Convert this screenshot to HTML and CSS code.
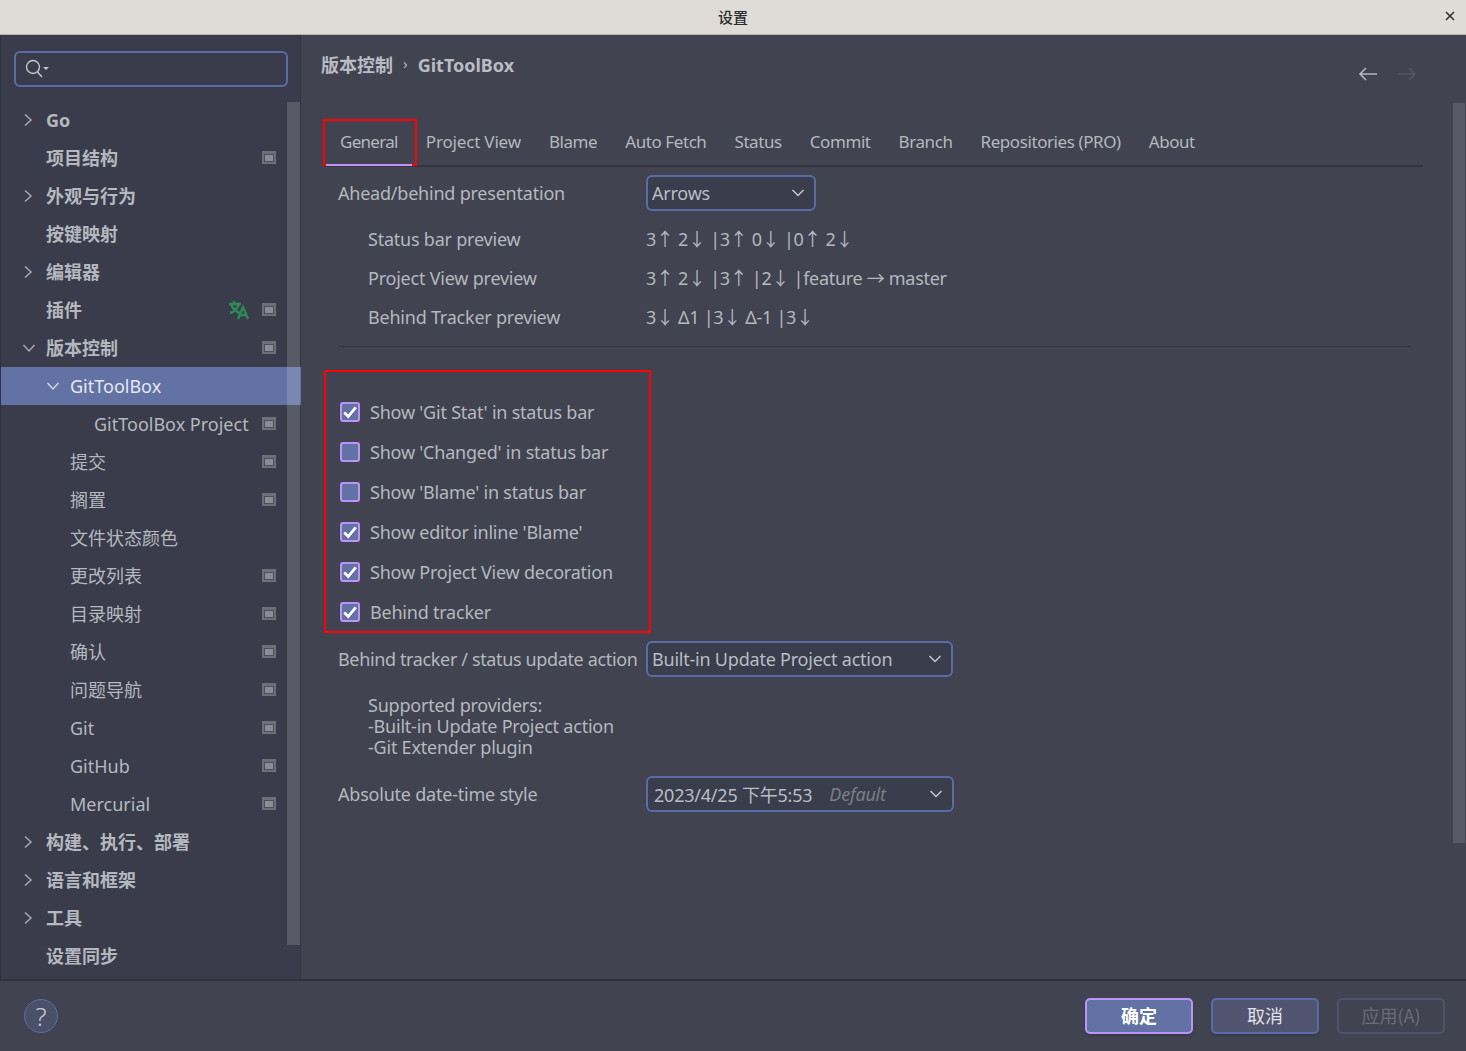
FILE: index.html
```html
<!doctype html>
<html>
    <head>
        <meta charset="utf-8">
        <title>设置</title>
        <link rel="stylesheet" href="styles.css">
    </head>
    <body>
        <header class="titlebar">
            <span class="title">设置</span>
            <svg class="close" width="10" height="10" viewBox="0 0 10 10"><path d="M1 1 9 9M9 1 1 9"/></svg>
        </header>
        <div class="main">
            <aside class="sidebar">
                <div class="search">
                    <svg width="26" height="22" viewBox="0 0 26 22"><circle cx="9" cy="9" r="6.5"/><path d="M13.5 14 18 19"/><path class="fill" d="M19 9h6l-3 3z"/></svg>
                </div>
                <nav class="tree">
                    <div class="row top"><svg class="chev" width="10" height="14" viewBox="0 0 10 14"><path d="M2 1.5 8 7l-6 5.5"/></svg><span class="latin">Go</span></div>
                    <div class="row top"><span>项目结构</span><i class="mod"></i></div>
                    <div class="row top"><svg class="chev" width="10" height="14" viewBox="0 0 10 14"><path d="M2 1.5 8 7l-6 5.5"/></svg><span>外观与行为</span></div>
                    <div class="row top"><span>按键映射</span></div>
                    <div class="row top"><svg class="chev" width="10" height="14" viewBox="0 0 10 14"><path d="M2 1.5 8 7l-6 5.5"/></svg><span>编辑器</span></div>
                    <div class="row top"><span>插件</span>
                        <svg class="lang" width="22" height="20" viewBox="0 0 22 20"><path d="M1 4h12M6 1v3M3 4c1 4 5 8 9 9M11 4c-1 4-5 8-9 9M10 19l5-12 5 12M12 15h6"/></svg>
                        <i class="mod"></i></div>
                    <div class="row top"><svg class="chev" width="14" height="10" viewBox="0 0 14 10"><path d="M1.5 2 7 8l5.5-6"/></svg><span>版本控制</span><i class="mod"></i></div>
                    <div class="row lvl1 selected"><svg class="chev" width="14" height="10" viewBox="0 0 14 10"><path d="M1.5 2 7 8l5.5-6"/></svg><span class="latin">GitToolBox</span></div>
                    <div class="row lvl2"><span class="latin">GitToolBox Project</span><i class="mod"></i></div>
                    <div class="row lvl1"><span>提交</span><i class="mod"></i></div>
                    <div class="row lvl1"><span>搁置</span><i class="mod"></i></div>
                    <div class="row lvl1"><span>文件状态颜色</span></div>
                    <div class="row lvl1"><span>更改列表</span><i class="mod"></i></div>
                    <div class="row lvl1"><span>目录映射</span><i class="mod"></i></div>
                    <div class="row lvl1"><span>确认</span><i class="mod"></i></div>
                    <div class="row lvl1"><span>问题导航</span><i class="mod"></i></div>
                    <div class="row lvl1"><span class="latin">Git</span><i class="mod"></i></div>
                    <div class="row lvl1"><span class="latin">GitHub</span><i class="mod"></i></div>
                    <div class="row lvl1"><span class="latin">Mercurial</span><i class="mod"></i></div>
                    <div class="row top"><svg class="chev" width="10" height="14" viewBox="0 0 10 14"><path d="M2 1.5 8 7l-6 5.5"/></svg><span>构建、执行、部署</span></div>
                    <div class="row top"><svg class="chev" width="10" height="14" viewBox="0 0 10 14"><path d="M2 1.5 8 7l-6 5.5"/></svg><span>语言和框架</span></div>
                    <div class="row top"><svg class="chev" width="10" height="14" viewBox="0 0 10 14"><path d="M2 1.5 8 7l-6 5.5"/></svg><span>工具</span></div>
                    <div class="row top"><span>设置同步</span></div>
                </nav>
                <div class="sidebar-scroll"></div>
            </aside>
            <section class="content">
                <div class="crumbs">
                    <span class="crumb">版本控制</span>
                    <span class="sep">›</span>
                    <span class="crumb latin">GitToolBox</span>
                    <div class="history">
                        <svg width="20" height="14" viewBox="0 0 20 14"><path d="M19 7H2M8 1 2 7l6 6"/></svg>
                        <svg class="off" width="20" height="14" viewBox="0 0 20 14"><path d="M1 7h17M12 1l6 6-6 6"/></svg>
                    </div>
                </div>
                <div class="tabs">
                    <span class="tab active">General</span>
                    <span class="tab">Project View</span>
                    <span class="tab">Blame</span>
                    <span class="tab">Auto Fetch</span>
                    <span class="tab">Status</span>
                    <span class="tab">Commit</span>
                    <span class="tab">Branch</span>
                    <span class="tab">Repositories (PRO)</span>
                    <span class="tab">About</span>
                </div>
                <div class="form">
                    <div class="field first">
                        <label class="field-label">Ahead/behind presentation</label>
                        <div class="combo arrows"><span>Arrows</span><svg width="14" height="8" viewBox="0 0 14 8"><path d="M1.5 1 7 6.5 12.5 1"/></svg></div>
                    </div>
                    <div class="preview"><span class="preview-label">Status bar preview</span><span class="value">3↑ 2↓ |3↑ 0↓ |0↑ 2↓</span></div>
                    <div class="preview"><span class="preview-label">Project View preview</span><span class="value">3↑ 2↓ |3↑ |2↓ |feature → master</span></div>
                    <div class="preview"><span class="preview-label">Behind Tracker preview</span><span class="value">3↓ Δ1 |3↓ Δ-1 |3↓</span></div>
                    <hr class="rule">
                    <div class="checks">
                        <div class="check on"><i class="box"><svg width="16" height="14" viewBox="0 0 14 12"><path d="M2 6.5 5.5 10 12 2"/></svg></i><span>Show 'Git Stat' in status bar</span></div>
                        <div class="check"><i class="box"></i><span>Show 'Changed' in status bar</span></div>
                        <div class="check"><i class="box"></i><span>Show 'Blame' in status bar</span></div>
                        <div class="check on"><i class="box"><svg width="16" height="14" viewBox="0 0 14 12"><path d="M2 6.5 5.5 10 12 2"/></svg></i><span>Show editor inline 'Blame'</span></div>
                        <div class="check on"><i class="box"><svg width="16" height="14" viewBox="0 0 14 12"><path d="M2 6.5 5.5 10 12 2"/></svg></i><span>Show Project View decoration</span></div>
                        <div class="check on"><i class="box"><svg width="16" height="14" viewBox="0 0 14 12"><path d="M2 6.5 5.5 10 12 2"/></svg></i><span>Behind tracker</span></div>
                    </div>
                    <div class="field action">
                        <label class="field-label">Behind tracker / status update action</label>
                        <div class="combo provider"><span>Built-in Update Project action</span><svg width="14" height="8" viewBox="0 0 14 8"><path d="M1.5 1 7 6.5 12.5 1"/></svg></div>
                    </div>
                    <div class="providers">Supported providers:<br>-Built-in Update Project action<br>-Git Extender plugin</div>
                    <div class="field datetime">
                        <label class="field-label">Absolute date-time style</label>
                        <div class="combo date"><span>2023/4/25 下午5:53</span><em>Default</em><svg width="14" height="8" viewBox="0 0 14 8"><path d="M1.5 1 7 6.5 12.5 1"/></svg></div>
                    </div>
                </div>
                <div class="content-scroll"></div>
            </section>
        </div>
        <footer class="footer">
            <span class="help">?</span>
            <div class="buttons">
                <button class="btn primary">确定</button>
                <button class="btn">取消</button>
                <button class="btn disabled">应用(A)</button>
            </div>
        </footer>
    </body>
</html>
```

FILE: styles.css
```css
html,
body {
    margin: 0;
    height: 1051px;
    overflow: hidden;
}

body {
    display: flex;
    flex-direction: column;
    background: #414350;
    color: #b4b8bf;
    font-family: "Noto Sans", "Noto Sans CJK SC", sans-serif;
    font-size: 18px;
}

.titlebar {
    height: 34px;
    flex: none;
    display: flex;
    align-items: center;
    justify-content: center;
    position: relative;
    background: #dfdcd8;
    border-bottom: 1px solid #b8b3aa;
    color: #2c2c2c;
    font-family: "Noto Sans CJK SC", sans-serif;
    font-size: 15px;
    font-weight: 500;
}

.title {
    margin-bottom: 1px;
}

.close {
    position: absolute;
    right: 11px;
    top: 11px;
}

.close path {
    fill: none;
    stroke: #2c2c2c;
    stroke-width: 1.5;
}

.main {
    flex: none;
    height: 944px;
    display: flex;
}

.sidebar {
    width: 301px;
    flex: none;
    position: relative;
    background: #3a3c4b;
    border-right: 1px solid #333542;
    border-left: 1px solid #2f313d;
    box-sizing: border-box;
}

.search {
    margin: 16px 13px 0 13px;
    height: 36px;
    width: 274px;
    box-sizing: border-box;
    border: 2px solid #5a6ca5;
    border-radius: 6px;
    display: flex;
    align-items: center;
    padding-left: 8px;
}

.search svg {
    fill: none;
    stroke: #c4c7cd;
    stroke-width: 1.4;
}

.search .fill {
    fill: #c4c7cd;
    stroke: none;
}

.tree {
    margin-top: 14px;
    font-family: "Noto Sans CJK SC", sans-serif;
}

.latin {
    font-family: "Noto Sans", sans-serif;
}

.row {
    height: 38px;
    display: flex;
    align-items: center;
    position: relative;
    padding-right: 25px;
    margin-right: -1px;
}

.row > span:not(.latin) {
    line-height: 26px;
    margin-bottom: 2px;
}

.row.top {
    padding-left: 45px;
    font-weight: 700;
}

.row.lvl1 {
    padding-left: 69px;
}

.row.lvl2 {
    padding-left: 93px;
}

.row.selected {
    background: #6272a4;
    color: #e6e8ee;
}

.chev {
    position: absolute;
    fill: none;
    stroke: #a6a9b2;
    stroke-width: 1.5;
}

.row.top .chev {
    left: 22px;
}

.row.top .chev[width="14"] {
    left: 21px;
}

.row.lvl1 .chev {
    left: 45px;
    stroke: #d4d6de;
}

.mod {
    margin-left: auto;
    margin-bottom: 2px;
    width: 14px;
    height: 13px;
    box-sizing: border-box;
    border: 2px solid #6d7079;
    border-top-width: 3px;
    background: #8a8d96;
    box-shadow: inset 0 0 0 1px #4c4e5a;
}

.lang {
    margin-left: auto;
    margin-right: 12px;
    fill: none;
    stroke: #2e8b57;
    stroke-width: 2.4;
}

.lang + .mod {
    margin-left: 0;
}

.sidebar-scroll {
    position: absolute;
    left: 286px;
    top: 67px;
    width: 13px;
    height: 843px;
    background: rgba(255, 255, 255, 0.15);
}

.content {
    flex: 1;
    position: relative;
    padding: 0 43px 0 22px;
}

.crumbs {
    height: 85px;
    box-sizing: border-box;
    padding: 16px 0 0 0;
    margin-left: -2px;
    display: flex;
    align-items: baseline;
    position: relative;
    gap: 10px;
}

.crumb {
    font-weight: 700;
    color: #b9bcc4;
}

.sep {
    align-self: flex-start;
    font-size: 15px;
    line-height: 25px;
}

.history {
    position: absolute;
    left: 1037px;
    top: 32px;
    display: flex;
    gap: 19px;
}

.history svg {
    fill: none;
    stroke: #b4b8bf;
    stroke-width: 1.5;
}

.history .off {
    stroke: #55575f;
}

.tabs {
    height: 45px;
    box-sizing: content-box;
    display: flex;
    align-items: center;
    gap: 28px;
    padding-left: 16px;
    border-bottom: 2px solid #33343f;
    margin-left: 1px;
    position: relative;
    font-size: 17px;
    letter-spacing: -0.42px;
}

.tab {
    margin-bottom: 3px;
}

.tab:nth-child(2) {
    letter-spacing: -0.17px;
}

.tab.active {
    position: relative;
    letter-spacing: -0.7px;
}

.tab.active::before {
    content: "";
    position: absolute;
    left: -17px;
    right: -19px;
    top: -11px;
    height: 43px;
    border: 2px solid #ff0000;
}

.tab.active::after {
    content: "";
    position: absolute;
    left: -14px;
    right: -14px;
    top: 34px;
    height: 2px;
    background: #bd93f9;
}

.form {
    padding-left: 15px;
    width: 1073px;
    letter-spacing: -0.22px;
}

.field {
    display: flex;
    align-items: center;
    height: 36px;
}

.field.first {
    margin-top: 8px;
    margin-bottom: 8px;
}

.field-label {
    width: 308px;
    flex: none;
    white-space: nowrap;
}

.action .field-label {
    letter-spacing: -0.36px;
}

.combo {
    height: 36px;
    box-sizing: border-box;
    background: #3a3d4c;
    border: 2px solid #5a6ca5;
    border-radius: 6px;
    display: flex;
    align-items: center;
    padding: 0 9px 0 4px;
    color: #b9bcc4;
    white-space: nowrap;
}

.combo svg {
    margin-left: auto;
    fill: none;
    stroke: #c4c7cd;
    stroke-width: 1.5;
}

.combo.arrows {
    width: 170px;
}

.combo.provider {
    width: 307px;
}

.combo.date {
    width: 308px;
    padding-left: 6px;
}

.combo em {
    color: #7b7d84;
    margin-left: 17px;
}

.preview {
    display: flex;
    height: 39px;
    align-items: center;
    padding-left: 30px;
}

.preview-label {
    width: 278px;
    flex: none;
}

.value {
    letter-spacing: -0.3px;
    margin-bottom: 2px;
}

.rule {
    margin: 10px 0 0;
    border: 0;
    height: 1px;
    background: #33343f;
}

.checks {
    margin: 23px 0 8px -14px;
    width: 323px;
    height: 259px;
    box-sizing: content-box;
    border: 2px solid #ff0000;
}

.check {
    height: 40px;
    display: flex;
    align-items: center;
    gap: 10px;
    padding-left: 14px;
}

.check:first-child {
    margin-top: 20px;
}

.box {
    width: 20px;
    height: 20px;
    box-sizing: border-box;
    background: #6272a4;
    border: 2px solid #bd93f9;
    border-radius: 3px;
    display: flex;
    align-items: center;
    justify-content: center;
}

.box svg {
    fill: none;
    stroke: #ffffff;
    stroke-width: 2.4;
}

.providers {
    padding: 18px 0 0 30px;
    line-height: 21px;
}

.field.datetime {
    margin-top: 18px;
}

.content-scroll {
    position: absolute;
    left: 1152px;
    top: 68px;
    width: 12px;
    height: 740px;
    background: #585a66;
}

.footer {
    flex: 1;
    display: flex;
    align-items: center;
    justify-content: space-between;
    border-top: 2px solid #2f313d;
    padding: 0 21px 0 24px;
}

.help {
    width: 32px;
    height: 32px;
    border-radius: 50%;
    border: 1px solid #5a6ca5;
    background: #4a5068;
    display: flex;
    align-items: center;
    justify-content: center;
    color: #c4c7cd;
    font-size: 26px;
    font-weight: 300;
}

.buttons {
    display: flex;
    gap: 18px;
}

.btn {
    width: 108px;
    height: 36px;
    box-sizing: border-box;
    border: 2px solid #5a6ca5;
    border-radius: 5px;
    background: #50546e;
    color: #e0e2e8;
    font-family: "Noto Sans CJK SC", sans-serif;
    font-size: 18px;
    padding: 0 0 2px;
    box-shadow: 0 2px 2px #383a46;
}

.btn.primary {
    background: #6272a4;
    border-color: #bd93f9;
    color: #ffffff;
    font-weight: 700;
}

.btn.disabled {
    background: transparent;
    border-color: #4e5268;
    color: #6b6d75;
    box-shadow: none;
}
```
